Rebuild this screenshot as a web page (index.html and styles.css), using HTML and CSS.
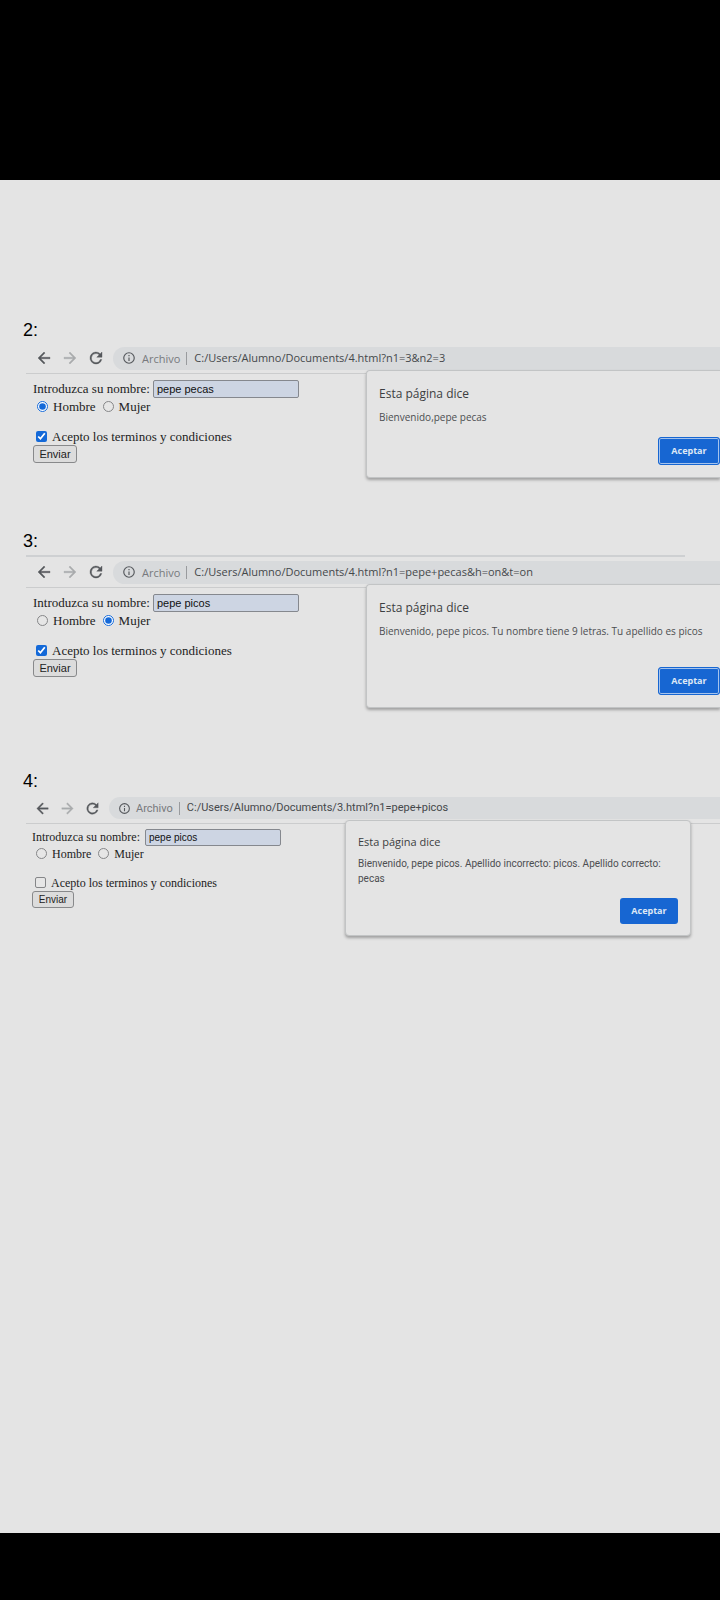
FILE: index.html
```html
<!DOCTYPE html>
<html lang="es">
<head>
<meta charset="utf-8">
<meta name="viewport" content="width=device-width, initial-scale=1">
<title>Ejercicios de formularios</title>
<link rel="stylesheet" href="styles.css">
</head>
<body>
<svg class="defs" aria-hidden="true">
  <symbol id="back" viewBox="0 0 24 24"><path d="M20 11H7.8l5.6-5.6L12 4l-8 8 8 8 1.400-1.400L7.800 13H20z"/></symbol>
  <symbol id="forward" viewBox="0 0 24 24"><path d="M4 11h12.200l-5.600-5.600L12 4l8 8-8 8-1.400-1.400 5.600-5.600H4z"/></symbol>
  <symbol id="reload" viewBox="0 0 24 24"><path d="M17.650 6.350A8 8 0 1 0 19.730 14h-2.080A6 6 0 1 1 12 6c1.660 0 3.140.690 4.220 1.780L13 11h7V4z"/></symbol>
  <symbol id="info" viewBox="0 0 24 24"><path d="M11 7h2v2h-2zm0 4h2v6h-2zm1-9a10 10 0 1 0 0 20 10 10 0 0 0 0-20zm0 18a8 8 0 1 1 0-16 8 8 0 0 1 0 16z"/></symbol>
</svg>
<main class="document">
  <section class="exercise">
    <h2 class="number">2:</h2>
    <div class="capture">
      <div class="toolbar">
        <button class="nav" aria-label="Atrás"><svg><use href="#back"/></svg></button>
        <button class="nav nav-off" aria-label="Adelante"><svg><use href="#forward"/></svg></button>
        <button class="nav" aria-label="Recargar"><svg><use href="#reload"/></svg></button>
        <div class="address"><svg class="info"><use href="#info"/></svg><span class="scheme">Archivo</span><span class="url">C:/Users/Alumno/Documents/4.html?n1=3&amp;n2=3</span></div>
      </div>
      <div class="page">
        <form class="form">
          <div class="row name"><label for="n2">Introduzca su nombre:</label><input class="text" id="n2" type="text" value="pepe pecas"></div>
          <div class="row choices"><input type="radio" name="g2" id="h2" checked><label for="h2">Hombre</label><input type="radio" name="g2" id="m2"><label for="m2">Mujer</label></div>
          <div class="row terms"><input type="checkbox" id="t2" checked><label for="t2">Acepto los terminos y condiciones</label></div>
          <button class="send" type="button">Enviar</button>
        </form>
        <div class="dialog" role="dialog" aria-labelledby="d2">
          <h3 class="title" id="d2">Esta página dice</h3>
          <p class="message">Bienvenido,pepe pecas</p>
          <button class="accept focused">Aceptar</button>
        </div>
      </div>
    </div>
  </section>
  <section class="exercise">
    <h2 class="number">3:</h2>
    <div class="capture ruled">
      <div class="toolbar">
        <button class="nav" aria-label="Atrás"><svg><use href="#back"/></svg></button>
        <button class="nav nav-off" aria-label="Adelante"><svg><use href="#forward"/></svg></button>
        <button class="nav" aria-label="Recargar"><svg><use href="#reload"/></svg></button>
        <div class="address"><svg class="info"><use href="#info"/></svg><span class="scheme">Archivo</span><span class="url">C:/Users/Alumno/Documents/4.html?n1=pepe+pecas&amp;h=on&amp;t=on</span></div>
      </div>
      <div class="page">
        <form class="form">
          <div class="row name"><label for="n3">Introduzca su nombre:</label><input class="text" id="n3" type="text" value="pepe picos"></div>
          <div class="row choices"><input type="radio" name="g3" id="h3"><label for="h3">Hombre</label><input type="radio" name="g3" id="m3" checked><label for="m3">Mujer</label></div>
          <div class="row terms"><input type="checkbox" id="t3" checked><label for="t3">Acepto los terminos y condiciones</label></div>
          <button class="send" type="button">Enviar</button>
        </form>
        <div class="dialog tall" role="dialog" aria-labelledby="d3">
          <h3 class="title" id="d3">Esta página dice</h3>
          <p class="message">Bienvenido, pepe picos. Tu nombre tiene 9 letras. Tu apellido es picos</p>
          <button class="accept focused">Aceptar</button>
        </div>
      </div>
    </div>
  </section>
  <section class="exercise">
    <h2 class="number">4:</h2>
    <div class="capture small">
      <div class="toolbar">
        <button class="nav" aria-label="Atrás"><svg><use href="#back"/></svg></button>
        <button class="nav nav-off" aria-label="Adelante"><svg><use href="#forward"/></svg></button>
        <button class="nav" aria-label="Recargar"><svg><use href="#reload"/></svg></button>
        <div class="address"><svg class="info"><use href="#info"/></svg><span class="scheme">Archivo</span><span class="url">C:/Users/Alumno/Documents/3.html?n1=pepe+picos</span></div>
      </div>
      <div class="page">
        <form class="form">
          <div class="row name"><label for="n4">Introduzca su nombre:</label><input class="text" id="n4" type="text" value="pepe picos"></div>
          <div class="row choices"><input type="radio" name="g4" id="h4"><label for="h4">Hombre</label><input type="radio" name="g4" id="m4"><label for="m4">Mujer</label></div>
          <div class="row terms"><input type="checkbox" id="t4"><label for="t4">Acepto los terminos y condiciones</label></div>
          <button class="send" type="button">Enviar</button>
        </form>
        <div class="dialog" role="dialog" aria-labelledby="d4">
          <h3 class="title" id="d4">Esta página dice</h3>
          <p class="message">Bienvenido, pepe picos. Apellido incorrecto: picos. Apellido correcto: pecas</p>
          <button class="accept">Aceptar</button>
        </div>
      </div>
    </div>
  </section>
</main>
</body>
</html>
```
FILE: styles.css
```css
* { box-sizing: border-box; }
body {
  margin: 0;
  min-height: 100vh;
  padding: 180px 0 67px;
  display: flex;
  flex-direction: column;
  background: #000;
}
.defs { display: none; }
.document {
  flex: 1;
  padding-top: 140px;
  background: #e4e4e4;
  overflow: hidden;
}
.number {
  margin: 0;
  padding-left: 23px;
  font: 18px/20px "Liberation Sans", Arial, sans-serif;
  color: #000;
}
.capture {
  margin-left: 26px;
  padding-top: 7px;
  height: 191px;
}
.ruled {
  position: relative;
  height: 220px;
  padding-top: 10px;
}
.ruled::before {
  content: "";
  position: absolute;
  top: 4px;
  left: 0;
  right: 35px;
  height: 2px;
  background: #ced0d2;
}
.toolbar {
  display: flex;
  align-items: center;
  height: 27px;
  padding: 0 0 4px 9px;
  gap: 8px;
  border-bottom: 1px solid #cbcccd;
}
.nav {
  width: 18px;
  height: 18px;
  padding: 0;
  border: 0;
  background: none;
}
.nav svg { display: block; width: 18px; height: 18px; fill: #55585c; stroke: #55585c; stroke-width: 0.5px; }
.nav-off svg { fill: #a9abad; stroke: #a9abad; }
.address {
  flex: 1;
  display: flex;
  align-items: center;
  height: 23px;
  padding-left: 9px;
  border-radius: 12px 0 0 12px;
  background: #d8dadc;
  font: 11px/16px "Open Sans", "Noto Sans", sans-serif;
  white-space: nowrap;
}
.info { width: 14px; height: 14px; fill: #55585c; }
.scheme {
  margin-left: 6px;
  padding-right: 6px;
  border-right: 1px solid #999b9e;
  line-height: 13px;
  color: #77797c;
}
.url { margin-left: 7px; color: #45484b; }
.page {
  display: grid;
  grid-template-columns: 340px 1fr;
  align-items: start;
}
.form {
  padding: 6px 0 0 7px;
  font: 13px/18px "Liberation Serif", "Times New Roman", serif;
  color: #222;
}
.row { display: flex; align-items: center; height: 18px; }
.text {
  width: 146px;
  height: 18px;
  margin-left: 3px;
  padding: 0 3px;
  border: 1px solid #85888e;
  border-radius: 2px;
  background: #cdd5e3;
  font: 11px/14px "Liberation Sans", Arial, sans-serif;
  color: #111;
}
.choices input, .terms input { width: 11px; height: 11px; margin: 0 5px 2px 3px; accent-color: #1469d8; }
.choices input { margin-left: 4px; }
.choices label + input { margin-left: 7px; }
.row.terms { height: 16px; margin-top: 13px; }
.send {
  display: block;
  width: 44px;
  height: 18px;
  padding: 0;
  border: 1px solid #88898b;
  border-radius: 3px;
  background: #dcdcdc;
  font: 11px/14px "Liberation Sans", Arial, sans-serif;
  color: #222;
}
input[type="radio"]:not(:checked), input[type="checkbox"]:not(:checked) {
  appearance: none;
  border: 1px solid #858688;
  border-radius: 2px;
  background: #e6e6e6;
}
input[type="radio"]:not(:checked) { border-radius: 50%; }
.dialog {
  display: flex;
  flex-direction: column;
  height: 108px;
  margin-top: -4px;
  padding: 15px 0 12px 12px;
  border: 1px solid #c2c4c5;
  border-right: 0;
  border-radius: 4px 0 0 4px;
  background: #e4e4e4;
  box-shadow: 0 2px 3px rgba(0, 0, 0, 0.3);
  font: 10px/15px "Open Sans", "Noto Sans", sans-serif;
  color: #4c4e51;
}
.tall { height: 124px; }
.title { margin: 0; font-size: 12px; font-weight: 400; line-height: 16px; color: #3c3e41; }
.message { margin: 8px 0 0; }
.accept {
  align-self: flex-end;
  width: 58px;
  height: 26px;
  margin-top: auto;
  padding: 0;
  border: 0;
  border-radius: 3px;
  background: #1766d2;
  font: 700 9px/14px "Open Sans", "Noto Sans", sans-serif;
  color: #dfe8f5;
}
.focused {
  width: 62px;
  height: 28px;
  border: 1px solid #1766d2;
  box-shadow: inset 0 0 0 1px #a5c3ec;
}
.small { padding-top: 6px; }
.small .toolbar { padding-left: 8px; }
.small .nav, .small .nav svg { width: 17px; height: 17px; }
.small .address { height: 22px; font-family: Roboto, sans-serif; }
.small .info { width: 13px; height: 13px; }
.small .scheme { margin-left: 5px; }
.small .page { grid-template-columns: 319px 1fr; }
.small .form { padding: 5px 0 0 6px; font-size: 12px; line-height: 17px; }
.small .row { height: 17px; }
.small .row.choices { height: 16px; }
.small .text { width: 136px; height: 17px; margin-left: 5px; font-size: 10px; }
.small .row.terms { height: 16px; margin-top: 13px; }
.small .send { width: 42px; height: 17px; font-size: 10px; }
.small .dialog {
  height: 116px;
  margin-right: 29px;
  padding: 13px 12px 11px;
  border-right: 1px solid #c2c4c5;
  border-radius: 4px;
}
.small .title { font-size: 11px; }
.small .message { margin-top: 6px; font-family: Roboto, sans-serif; }
```
